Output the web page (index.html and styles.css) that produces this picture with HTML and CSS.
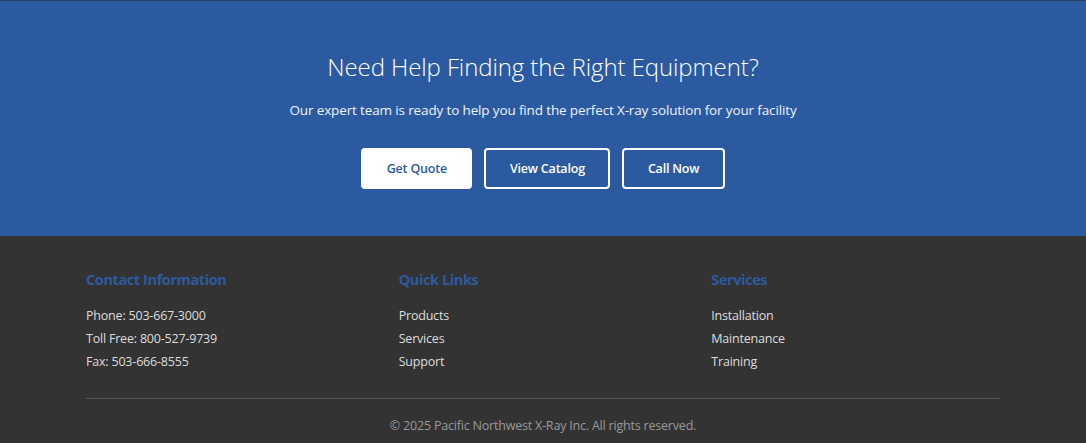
FILE: index.html
```html
<!DOCTYPE html>
<html lang="en">
<head>
<meta charset="utf-8">
<title>Pacific Northwest X-Ray</title>
<link rel="stylesheet" href="styles.css">
</head>
<body>
<section class="cta">
  <h2 class="cta-title">Need Help Finding the Right Equipment?</h2>
  <p class="cta-text">Our expert team is ready to help you find the perfect X-ray solution for your facility</p>
  <div class="cta-buttons">
    <a class="btn btn-solid" href="#">Get Quote</a>
    <a class="btn btn-outline" href="#">View Catalog</a>
    <a class="btn btn-outline" href="#">Call Now</a>
  </div>
</section>
<footer class="footer">
  <div class="footer-inner">
    <div class="footer-cols">
      <div class="footer-col">
        <h3 class="footer-head">Contact Information</h3>
        <ul class="footer-list">
          <li>Phone: 503-667-3000</li>
          <li>Toll Free: 800-527-9739</li>
          <li>Fax: 503-666-8555</li>
        </ul>
      </div>
      <div class="footer-col">
        <h3 class="footer-head">Quick Links</h3>
        <ul class="footer-list">
          <li>Products</li>
          <li>Services</li>
          <li>Support</li>
        </ul>
      </div>
      <div class="footer-col">
        <h3 class="footer-head">Services</h3>
        <ul class="footer-list">
          <li>Installation</li>
          <li>Maintenance</li>
          <li>Training</li>
        </ul>
      </div>
    </div>
    <div class="footer-bottom">© 2025 Pacific Northwest X-Ray Inc. All rights reserved.</div>
  </div>
</footer>
</body>
</html>
```
FILE: styles.css
```css
* { box-sizing: border-box; }
html, body { margin: 0; padding: 0; }
body {
  font-family: "Open Sans", "Noto Sans", "Liberation Sans", sans-serif;
  background: #333333;
}
.cta {
  background: #2c5aa0;
  border-top: 1px solid #2a3f66;
  height: 236px;
  padding-top: 48px;
  text-align: center;
  color: #ffffff;
}
.cta-title {
  margin: 0;
  font-size: 24px;
  font-weight: 300;
  line-height: 36px;
  letter-spacing: -0.1px;
}
.cta-text {
  margin: 14px 0 0;
  font-size: 13.5px;
  letter-spacing: -0.14px;
  line-height: 22px;
  color: #eef2f8;
}
.cta-buttons {
  margin-top: 27px;
  display: flex;
  justify-content: center;
  gap: 12px;
}
.btn {
  display: inline-flex;
  align-items: center;
  justify-content: center;
  height: 41px;
  padding: 0 23.5px;
  border-radius: 4px;
  font-size: 12.5px;
  letter-spacing: -0.2px;
  font-weight: 600;
  text-decoration: none;
}
.btn-solid {
  background: #ffffff;
  color: #2c5aa0;
  border: 2px solid #ffffff;
}
.btn-outline {
  background: transparent;
  color: #ffffff;
  border: 2px solid #ffffff;
}
.footer {
  background: #333333;
  color: #dddddd;
  padding-top: 33px;
}
.footer-inner {
  width: 914px;
  margin: 0 auto;
}
.footer-cols {
  display: grid;
  grid-template-columns: repeat(3, 1fr);
  gap: 24px;
}
.footer-head {
  margin: 0 0 13px;
  font-size: 14.5px;
  font-weight: 700;
  letter-spacing: -0.4px;
  line-height: 22px;
  color: #2c5aa0;
}
.footer-list {
  list-style: none;
  margin: 0;
  padding: 0;
  font-size: 12.5px;
  letter-spacing: -0.2px;
  line-height: 23px;
}
.footer-bottom {
  margin-top: 25px;
  border-top: 1px solid #555555;
  padding-top: 18px;
  text-align: center;
  font-size: 12.5px;
  letter-spacing: -0.2px;
  color: #999999;
}
```
